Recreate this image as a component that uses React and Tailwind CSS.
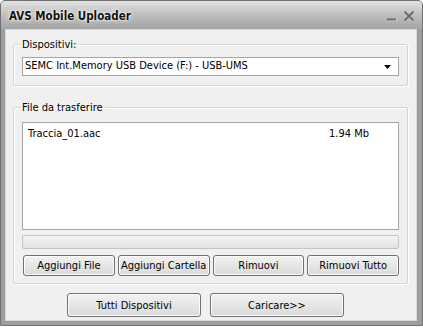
const font = { fontFamily: '"DejaVu Sans Condensed", "DejaVu Sans", sans-serif', fontStretch: 'condensed' };

const Button = ({ children, className = '' }) => (
  <button
    className={`flex items-center justify-center rounded-[3px] border border-[#707070] bg-gradient-to-b from-[#f2f2f2] to-[#dadada] text-[11px] leading-none text-black shadow-[inset_0_0_0_1px_#fcfcfc] ${className}`}
  >
    {children}
  </button>
);

const Group = ({ label, children, className = '' }) => (
  <fieldset className={`ml-[7px] w-[395px] rounded-[2px] border border-[#d5d5d5] shadow-[inset_1px_1px_0_#ffffff,1px_1px_0_#ffffff] ${className}`}>
    <legend className="ml-[6px] px-[2px] text-[11px] leading-[13px] text-black">{label}</legend>
    {children}
  </fieldset>
);

export default function App() {
  return (
    <div className="h-[330px] w-[423px] bg-white" style={font}>
      <div className="flex h-[326px] w-[423px] flex-col overflow-hidden rounded-t-[5px] border border-[#6f6f6f] bg-[#9d9d9d]">
        {/* Title bar */}
        <div className="flex h-[29px] shrink-0 items-center justify-between bg-gradient-to-b from-[#e2e2e2] via-[#bdbdbd] to-[#a3a3a3] pl-[8px] pr-[7px]">
          <span className="pt-[2px] text-[11.5px] font-bold text-[#111] [text-shadow:0_0_4px_#ffffff,0_0_2px_#ffffff]">
            AVS Mobile Uploader
          </span>
          <div className="flex items-center gap-[6px] pt-[1px]">
            <svg width="10" height="12" viewBox="0 0 10 12">
              <rect x="0.5" y="9" width="9" height="2" fill="#ffffff" opacity="0.7" />
              <rect x="0" y="8.5" width="9" height="2" fill="#6a6a6a" />
            </svg>
            <svg width="12" height="12" viewBox="0 0 12 12">
              <path d="M1.5 1.5 L10.5 10.5 M10.5 1.5 L1.5 10.5" stroke="#ffffff" strokeWidth="2.4" opacity="0.6" />
              <path d="M1.5 1.5 L10.5 10.5 M10.5 1.5 L1.5 10.5" stroke="#666666" strokeWidth="1.8" />
            </svg>
          </div>
        </div>

        {/* Content panel */}
        <div className="mb-[5px] ml-[5px] mr-[6px] flex flex-1 flex-col bg-[#f0f0f0] pt-[8px] shadow-[0_0_0_1px_#d9d9d9]">
          <Group label="Dispositivi:" className="pb-[9px]">
            <div className="ml-[8px] mt-[6px] flex h-[19px] w-[377px] items-center justify-between border border-[#a5a5a5] bg-white pl-[2px] pr-[7px] text-[11px] text-black">
              <span>SEMC Int.Memory USB Device (F:) - USB-UMS</span>
              <svg width="7" height="4" viewBox="0 0 7 4">
                <path d="M0 0 H7 L3.5 4 Z" fill="#000" />
              </svg>
            </div>
          </Group>

          <Group label="File da trasferire" className="mt-[15px] pb-[7px]">
            <div className="ml-[8px] mt-[8px] h-[108px] w-[377px] border border-[#a5a5a5] bg-white">
              <div className="flex pl-[5px] pt-[4px] text-[11px] leading-[14px] text-black">
                <span className="flex-1">Traccia_01.aac</span>
                <span className="mr-[29px]">1.94 Mb</span>
              </div>
            </div>
            <div className="ml-[8px] mt-[5px] h-[14px] w-[377px] rounded-[2px] border border-[#c4c4c4] bg-gradient-to-b from-[#f4f4f4] to-[#e2e2e2]" />
            <div className="ml-[9px] mt-[6px] grid h-[21px] w-[376px] grid-cols-4 gap-[3px]">
              <Button>Aggiungi File</Button>
              <Button>Aggiungi Cartella</Button>
              <Button>Rimuovi</Button>
              <Button>Rimuovi Tutto</Button>
            </div>
          </Group>

          <div className="mt-[9px] flex gap-[9px] pl-[61px]">
            <Button className="h-[24px] w-[134px]">Tutti Dispositivi</Button>
            <Button className="h-[24px] w-[134px]">Caricare&gt;&gt;</Button>
          </div>
        </div>
      </div>
    </div>
  );
}
